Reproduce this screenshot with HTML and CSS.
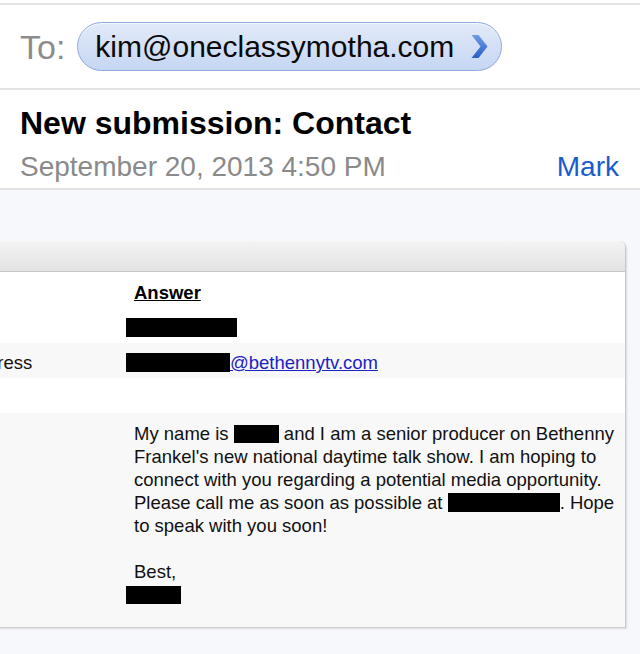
FILE: index.html
```html
<!DOCTYPE html>
<html lang="en">
<head>
<meta charset="utf-8">
<title>New submission: Contact</title>
<link rel="stylesheet" href="styles.css">
</head>
<body>
<div class="screen">
  <header class="mail-head">
    <div class="to-row">
      <span class="to-label">To:</span>
      <span class="pill">
        <span class="pill-text">kim@oneclassymotha.com</span>
        <svg class="chev" width="17" height="23" viewBox="0 0 17 23" aria-hidden="true">
          <defs>
            <linearGradient id="cg" x1="0" y1="0" x2="0" y2="1">
              <stop offset="0" stop-color="#6f9be8"/>
              <stop offset="1" stop-color="#2c5fc4"/>
            </linearGradient>
          </defs>
          <polygon points="0.5,0 7.5,0 16.5,11.5 7.5,23 0.5,23 9.5,11.5" fill="url(#cg)"/>
        </svg>
      </span>
    </div>
    <div class="subject">
      <div class="title">New submission: Contact</div>
      <div class="meta">
        <span class="date">September 20, 2013 4:50 PM</span>
        <span class="mark">Mark</span>
      </div>
    </div>
  </header>

  <main class="body-area">
    <div class="card">
      <div class="card-head"></div>
      <div class="rows">
        <div class="row row-white row-top">
          <div class="c1"></div>
          <div class="c2"><span class="th">Answer</span></div>
        </div>
        <div class="row row-white">
          <div class="c1"></div>
          <div class="c2"><span class="redact r-name"></span></div>
        </div>
        <div class="row row-gray">
          <div class="c1">Email Address</div>
          <div class="c2"><span class="redact r-mail"></span><a class="link" href="#">@bethennytv.com</a></div>
        </div>
        <div class="row row-white">
          <div class="c1"></div>
          <div class="c2"></div>
        </div>
        <div class="row row-gray row-msg">
          <div class="c1"></div>
          <div class="c2">
            <p class="msg">My name is <span class="redact r-first"></span> and I am a senior producer on Bethenny Frankel's new national daytime talk show. I am hoping to connect with you regarding a potential media opportunity. Please call me as soon as possible at <span class="redact r-phone"></span>. Hope to speak with you soon!</p>
            <p class="msg sign">Best,</p>
            <div class="sig-line"><span class="redact r-sig"></span></div>
          </div>
        </div>
      </div>
    </div>
  </main>
</div>
</body>
</html>
```

FILE: styles.css
```css
html, body {
  margin: 0;
  padding: 0;
}

body {
  background: #f7f8fb;
  font-family: "Liberation Sans", Arial, Helvetica, sans-serif;
  color: #000;
  overflow: hidden;
}

.screen {
  width: 640px;
  height: 654px;
  display: flex;
  flex-direction: column;
}

.mail-head {
  background: #fff;
  padding-top: 3px;
}

.to-row {
  border-top: 2px solid #e3e3e3;
  border-bottom: 2px solid #e3e3e3;
  height: 83px;
  display: flex;
  align-items: center;
  padding-left: 20px;
}

.to-label {
  font-size: 34px;
  color: #8c8c8c;
  margin-right: 12px;
  line-height: 1;
}

.pill {
  height: 47px;
  border: 1px solid #8ea9dc;
  border-radius: 25px;
  background: linear-gradient(#e2eaf9, #c6d6f2);
  display: flex;
  align-items: center;
  padding: 0 13px 0 17px;
  box-shadow: inset 0 1px 0 rgba(255,255,255,0.7);
}

.pill-text {
  font-size: 30px;
  line-height: 1;
  color: #0a0a0a;
}

.chev {
  margin-left: 17px;
  display: block;
}

.subject {
  padding: 14px 20px 0 20px;
  height: 84px;
  border-bottom: 2px solid #e3e3e3;
}

.title {
  font-size: 32px;
  font-weight: bold;
  line-height: 38px;
}

.meta {
  display: flex;
  justify-content: space-between;
  align-items: baseline;
  margin-top: 8px;
  line-height: 34px;
  font-size: 28px;
}

.date {
  color: #8a8a8a;
}

.mark {
  color: #1a5ccd;
  margin-right: 1px;
}

.body-area {
  flex: 1;
  padding-top: 51px;
}

.card {
  margin-left: -94px;
  margin-right: 14px;
  background: #fff;
  border-right: 1px solid #c9c9c9;
  border-bottom: 1px solid #cfcfcf;
  border-top-right-radius: 7px;
  box-shadow: 1px 1px 2px rgba(0,0,0,0.12);
  overflow: hidden;
}

.card-head {
  height: 30px;
  background: linear-gradient(#f4f4f4, #e2e2e2);
  border-bottom: 1px solid #c8c8c8;
}

.row {
  display: flex;
  font-size: 18.5px;
  line-height: 23px;
}

.row-white { background: #fff; }
.row-gray { background: #f8f8f8; }

.c1 {
  width: 220px;
  padding: 8px 0 4px 8px;
  box-sizing: border-box;
  white-space: nowrap;
  color: #111;
}

.c2 {
  flex: 1;
  padding: 8px 8px 4px 8px;
  min-height: 23px;
}

.row-top .c2 {
  padding-top: 9px;
}

.th {
  font-weight: bold;
  text-decoration: underline;
}

.redact {
  display: inline-block;
  background: #000;
  vertical-align: -3px;
  height: 19px;
}

.r-name { width: 111px; margin-left: -8px; }
.r-mail { width: 104px; margin-left: -8px; }
.r-first { width: 45px; height: 18px; }
.r-phone { width: 112px; }
.r-sig { width: 55px; height: 18px; margin-left: -8px; }

.sig-line {
  height: 23px;
}

.link {
  color: #1b22c2;
  text-decoration: underline;
}

.row-msg .c2 {
  padding-top: 9px;
  padding-bottom: 21px;
}

.msg {
  margin: 0;
  color: #111;
}

.sign {
  margin-top: 23px;
}
```
